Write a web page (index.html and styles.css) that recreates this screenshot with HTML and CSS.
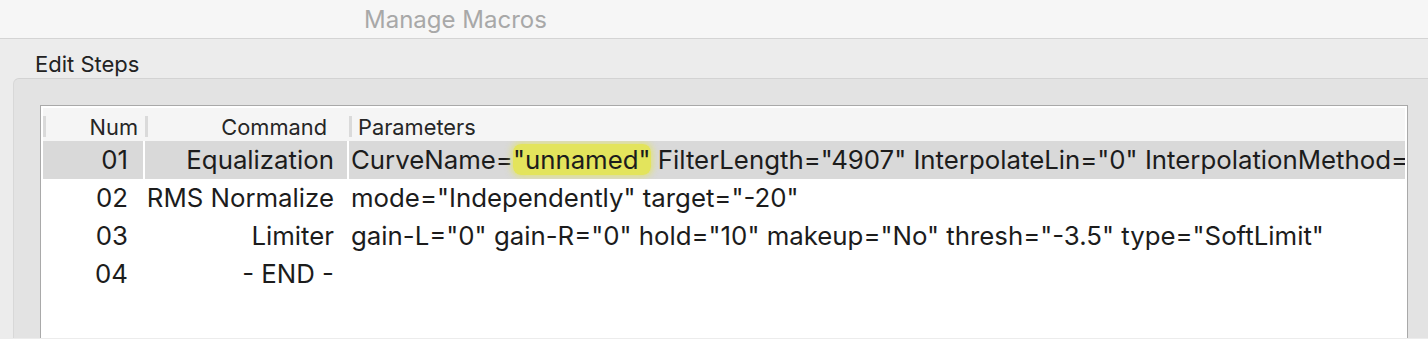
FILE: index.html
```html
<!DOCTYPE html>
<html lang="en">
<head>
  <meta charset="UTF-8">
  <title>Manage Macros</title>
  <link rel="stylesheet" href="styles.css">
</head>
<body>
  <!-- Title Bar -->
  <div class="titlebar">
    <span class="title">Manage Macros</span>
  </div>

  <!-- Window Body -->
  <div class="window">
    <div class="group-label">Edit Steps</div>
    <div class="group">
      <div class="list">
        <div class="list-header">
          <div class="head-cell num"><span class="sep"></span><span class="head-text">Num</span></div>
          <div class="head-cell cmd"><span class="sep"></span><span class="head-text">Command</span></div>
          <div class="head-cell params"><span class="sep"></span><span class="head-text">Parameters</span></div>
        </div>

        <div class="row selected">
          <div class="cell num">01</div>
          <div class="cell cmd">Equalization</div>
          <div class="cell params">CurveName=<span class="found">"unnamed"</span> FilterLength="4907" InterpolateLin="0" InterpolationMethod="B-spline"</div>
        </div>
        <div class="row">
          <div class="cell num">02</div>
          <div class="cell cmd">RMS Normalize</div>
          <div class="cell params">mode="Independently" target="-20"</div>
        </div>
        <div class="row">
          <div class="cell num">03</div>
          <div class="cell cmd">Limiter</div>
          <div class="cell params">gain-L="0" gain-R="0" hold="10" makeup="No" thresh="-3.5" type="SoftLimit"</div>
        </div>
        <div class="row">
          <div class="cell num">04</div>
          <div class="cell cmd">- END -</div>
          <div class="cell params"></div>
        </div>
      </div>
    </div>
  </div>
</body>
</html>
```

FILE: styles.css
```css
/* General Styles */
body {
  font-family: Inter, 'Noto Sans', sans-serif;
  margin: 0;
  padding: 0;
  height: 339px;
  overflow: hidden;
  background-color: #ececec;
  color: #1c1c1c;
}

/* Title Bar */
.titlebar {
  height: 38px;
  background-color: #f6f6f6;
  border-bottom: 1px solid #d4d4d4;
  display: flex;
  align-items: center;
  padding-left: 364px;
}

.titlebar .title {
  font-size: 24px;
  color: #a8a8a8;
}

/* Window Body */
.window {
  padding-left: 13px;
}

.group-label {
  height: 39px;
  line-height: 50px;
  padding-left: 22px;
  font-size: 22px;
  color: #222;
}

.group {
  background-color: #e3e3e3;
  border-top: 1px solid #d3d3d3;
  border-left: 1px solid #d8d8d8;
  border-radius: 6px 0 0 0;
  padding: 26px 20px 0 26px;
}

/* List */
.list {
  width: 1362px;
  height: 228px;
  overflow: hidden;
  background-color: #fff;
  border: 1px solid #a9a9a9;
  border-bottom: none;
  padding: 2px;
}

.list-header,
.row {
  display: grid;
  grid-template-columns: 100px 202px 1fr;
  column-gap: 2px;
}

.list-header {
  height: 33px;
  background-color: #f5f5f5;
  font-size: 21.8px;
  color: #262626;
}

.head-cell {
  display: flex;
  align-items: center;
}

.head-cell .sep {
  width: 3px;
  height: 21px;
  margin-top: 4px;
  background-color: #dadada;
}

.head-cell .head-text {
  flex: 1;
  padding-top: 4px;
}

.head-cell.num .head-text {
  text-align: right;
  padding-right: 5px;
}

.head-cell.cmd .head-text {
  text-align: right;
  padding-right: 20px;
}

.head-cell.params .head-text {
  padding-left: 6px;
}

.row {
  height: 38px;
  font-size: 25.8px;
}

.cell {
  line-height: 38px;
  white-space: nowrap;
  overflow: hidden;
}

.cell.num {
  text-align: right;
  padding-right: 15px;
}

.cell.cmd {
  text-align: right;
  padding-right: 13px;
}

.cell.params {
  padding-left: 2px;
}

.row.selected .cell {
  background-color: #d9d9d9;
}

/* Find highlight */
.found {
  background-color: #e3e45c;
  border-radius: 8px;
  box-shadow: 0 0 6px 2px rgba(227, 228, 92, 0.7);
}
```
